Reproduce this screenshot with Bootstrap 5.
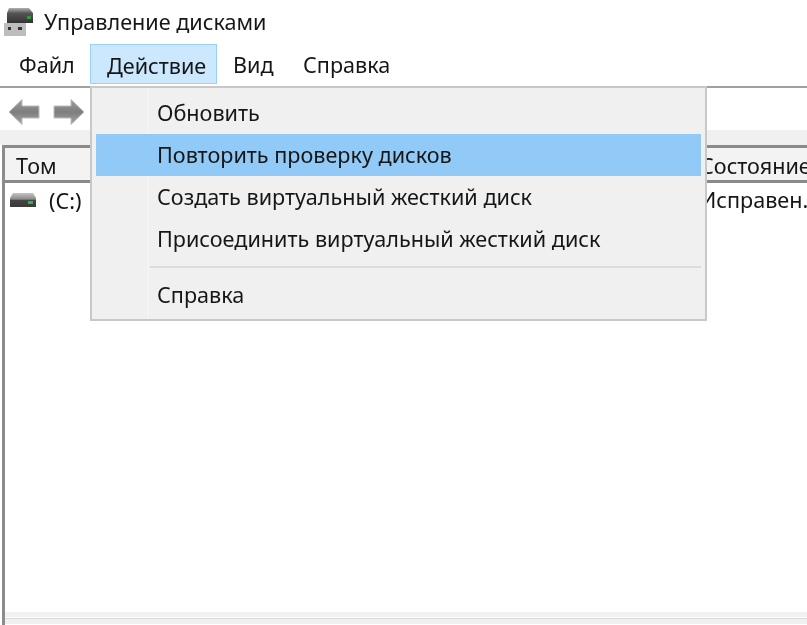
<!DOCTYPE html>
<html lang="ru">
<head>
  <meta charset="UTF-8" />
  <title>Управление дисками</title>
  <link href="https://cdn.jsdelivr.net/npm/bootstrap@5.3.0/dist/css/bootstrap.min.css" rel="stylesheet">
  <style>
    html, body { height: 625px; overflow: hidden; }
    body { background: #fff; color: #161616; font-family: "Noto Sans", "Open Sans", sans-serif; font-size: 21.6px; line-height: 1.2; position: relative; filter: blur(.35px); }
    .win-title { height: 44px; padding-left: 4px; gap: 10px; }
    .win-menubar { height: 40px; padding-left: 2px; }
    .win-menubar span { padding: 0 16px 0 17px; line-height: 42px; height: 40px; flex: none; }
    .win-menubar .win-file { width: 88px; }
    .win-menubar .win-open { background: #cce8ff; outline: 1px solid #99d1ff; outline-offset: -1px; width: 127px; line-height: 44px; }
    .win-menubar .win-view { padding-left: 16px; width: 69px; }
    .win-tools { height: 46px; padding: 4px 0 0 8px; margin-top: 2px; border-top: 2px solid #a0a0a0; gap: 13px; }
    .win-strip { height: 15px; background: #f0f0f0; margin-top: -2px; }
    .win-pane { height: 480px; margin-left: 2px; border-left: 3px solid #8c8c8c; }
    .win-head { height: 38px; background: #f3f3f3; border-top: 3px solid #8a8a8a; border-bottom: 3px solid #8a8a8a; white-space: nowrap; }
    .win-head span { line-height: 35px; }
    .win-col1 { width: 695px; padding-left: 11px; flex: none; }
    .win-row { height: 429px; padding-top: 1px; white-space: nowrap; }
    .win-row .win-col1 { padding-left: 5px; gap: 13px; height: 34px; }
    .win-row svg { margin-top: -3px; }
    .win-foot-a { height: 5px; background: #f1f1f1; }
    .win-foot-b { height: 6px; background: #f0f0f0; border-top: 1px solid #d8d8d8; margin-top: 1px; }
    .win-foot-c { height: 2px; background: #a0a0a0; }
    .win-menu { position: absolute; left: 90px; top: 86px; width: 617px; height: 235px; background: #f0f0f0; border: 2px solid #c8c8c8; padding: 4px; }
    .win-menu-item { height: 42px; padding-left: 61px; line-height: 42px; white-space: nowrap; position: relative; }
    .win-menu-item.win-hover { background: #91c9f7; }
    .win-menu-sep { height: 2px; margin: 6px 0 6px 54px; background: #dcdcdc; }
    .win-gutter { position: absolute; left: 55px; top: 0; bottom: 0; width: 2px; background: #f3f3f3; }
  </style>
</head>
<body>
  <div class="win-title d-flex align-items-center">
    <svg width="30" height="28" viewBox="0 0 30 28">
      <defs><linearGradient id="drv" x1="0" y1="0" x2="0" y2="1"><stop offset="0" stop-color="#b0b0b0"/><stop offset=".35" stop-color="#555"/><stop offset="1" stop-color="#333"/></linearGradient></defs>
      <path d="M5 0h20l4 5v10H3V5z" fill="url(#drv)"/>
      <rect x="23" y="8" width="4" height="3" fill="#2f9a3c"/>
      <rect x="0" y="15" width="22" height="13" fill="#bdbdbd"/>
      <rect x="4" y="19" width="3" height="3" fill="#333"/>
      <rect x="14" y="19" width="4" height="3" fill="#333"/>
    </svg>
    <span>Управление дисками</span>
  </div>
  <div class="win-menubar d-flex">
    <span class="win-file">Файл</span>
    <span class="win-open">Действие</span>
    <span class="win-view">Вид</span>
    <span>Справка</span>
  </div>
  <div class="win-tools d-flex align-items-center">
    <svg width="32" height="28" viewBox="0 0 32 28">
      <defs><linearGradient id="arw" x1="0" y1="0" x2="0" y2="1"><stop offset="0" stop-color="#9c9c9c"/><stop offset=".5" stop-color="#7e7e7e"/><stop offset="1" stop-color="#a4a4a4"/></linearGradient></defs>
      <path d="M1 14 14 1.500v6.500h17v12H14v6.500z" fill="url(#arw)" stroke="#bcbcbc"/>
    </svg>
    <svg width="32" height="28" viewBox="0 0 32 28"><path d="M31 14 18 1.500v6.500H1v12h17v6.500z" fill="url(#arw)" stroke="#bcbcbc"/></svg>
  </div>
  <div class="win-strip"></div>
  <div class="win-pane">
    <div class="win-head d-flex"><span class="win-col1">Том</span><span>Состояние</span></div>
    <div class="win-row d-flex">
      <span class="win-col1 d-flex align-items-center">
        <svg width="26" height="14" viewBox="0 0 26 14">
          <defs><linearGradient id="vol" x1="0" y1="0" x2="0" y2="1"><stop offset="0" stop-color="#c4c4c4"/><stop offset=".45" stop-color="#8a8a8a"/><stop offset=".5" stop-color="#444"/><stop offset="1" stop-color="#3a3a3a"/></linearGradient></defs>
          <path d="M3 0h20l3 5v9H0V5z" fill="url(#vol)"/>
          <rect x="18" y="8" width="5" height="3" fill="#35b04a"/>
        </svg>
        <span>(C:)</span>
      </span>
      <span class="lh-base">Исправен.</span>
    </div>
    <div class="win-foot-a"></div>
    <div class="win-foot-b"></div>
  </div>
  <div class="win-foot-c"></div>

  <div class="win-menu">
    <div class="win-gutter"></div>
    <div class="win-menu-item">Обновить</div>
    <div class="win-menu-item win-hover">Повторить проверку дисков</div>
    <div class="win-menu-item">Создать виртуальный жесткий диск</div>
    <div class="win-menu-item">Присоединить виртуальный жесткий диск</div>
    <div class="win-menu-sep"></div>
    <div class="win-menu-item">Справка</div>
  </div>
  <script src="https://cdn.jsdelivr.net/npm/bootstrap@5.3.0/dist/js/bootstrap.bundle.min.js"></script>
</body>
</html>
